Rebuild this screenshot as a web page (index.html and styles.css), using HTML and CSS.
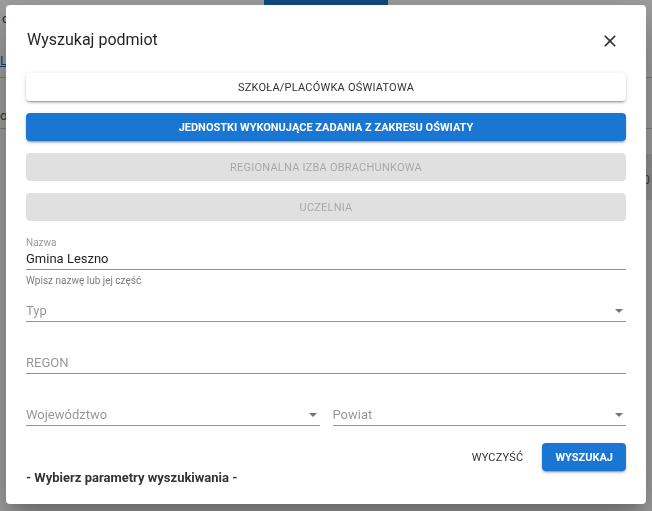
FILE: index.html
```html
<!DOCTYPE html>
<html lang="pl">
<head>
    <meta charset="UTF-8">
    <meta name="viewport" content="width=device-width, initial-scale=1.0">
    <title>Wyszukaj podmiot</title>
    <link rel="stylesheet" href="styles.css">
</head>
<body>
    <!-- page behind the dialog -->
    <div class="page">
        <div class="page-nav">
            <span class="page-nav-text">c</span>
            <div class="page-tab"></div>
        </div>
        <div class="page-row page-row--link">L</div>
        <div class="page-row page-row--tall">o *</div>
        <div class="page-box">0</div>
    </div>

    <div class="backdrop"></div>

    <div class="dialog-wrap">
        <div class="dialog">
            <div class="dialog-header">
                <h2 class="dialog-title">Wyszukaj podmiot</h2>
                <button class="close-btn" aria-label="Zamknij">
                    <svg width="20" height="20" viewBox="0 0 24 24"><path d="M19 6.41 17.59 5 12 10.59 6.41 5 5 6.41 10.59 12 5 17.59 6.41 19 12 13.41 17.59 19 19 17.59 13.41 12z" fill="#333"/></svg>
                </button>
            </div>

            <div class="type-list">
                <button class="type-btn type-btn--raised">Szkoła/placówka oświatowa</button>
                <button class="type-btn type-btn--active">Jednostki wykonujące zadania z zakresu oświaty</button>
                <button class="type-btn type-btn--disabled" disabled>Regionalna Izba Obrachunkowa</button>
                <button class="type-btn type-btn--disabled" disabled>Uczelnia</button>
            </div>

            <form class="search-form">
                <div class="field field--with-helper">
                    <label class="field-label" for="nazwa">Nazwa</label>
                    <input class="field-input" id="nazwa" type="text" value="Gmina Leszno">
                    <div class="field-helper">Wpisz nazwę lub jej część</div>
                </div>

                <div class="field field--no-label">
                    <div class="field-select">
                        <span class="field-placeholder">Typ</span>
                        <svg class="select-arrow" width="8" height="4" viewBox="0 0 8 4"><path d="M0 0h8L4 4z" fill="#757575"/></svg>
                    </div>
                </div>

                <div class="field field--no-label">
                    <input class="field-input" type="text" placeholder="REGON">
                </div>

                <div class="field-row">
                    <div class="field field--no-label">
                        <div class="field-select">
                            <span class="field-placeholder">Województwo</span>
                            <svg class="select-arrow" width="8" height="4" viewBox="0 0 8 4"><path d="M0 0h8L4 4z" fill="#757575"/></svg>
                        </div>
                    </div>
                    <div class="field field--no-label">
                        <div class="field-select">
                            <span class="field-placeholder">Powiat</span>
                            <svg class="select-arrow" width="8" height="4" viewBox="0 0 8 4"><path d="M0 0h8L4 4z" fill="#757575"/></svg>
                        </div>
                    </div>
                </div>

                <div class="actions">
                    <button type="reset" class="text-btn">Wyczyść</button>
                    <button type="submit" class="search-btn">Wyszukaj</button>
                </div>
            </form>

            <div class="search-info">- Wybierz parametry wyszukiwania -</div>
        </div>
    </div>
</body>
</html>
```

FILE: styles.css
```css
* {
    margin: 0;
    padding: 0;
    box-sizing: border-box;
}

body {
    font-family: Roboto, 'Noto Sans', sans-serif;
    background-color: #fff;
    overflow: hidden;
    height: 511px;
}

/* page behind */
.page {
    color: #1565c0;
    font-size: 13px;
}

.page-nav {
    display: flex;
    height: 48px;
}

.page-nav-text {
    padding: 11px 0 0 2px;
    color: #0d47a1;
    width: 264px;
}

.page-tab {
    width: 124px;
    background-color: #1976d2;
}

.page-row {
    height: 30px;
    border-bottom: 1px solid #ccc;
}

.page-row--link {
    padding-top: 5px;
    text-decoration: underline;
}

.page-row--tall {
    height: 51px;
    padding-top: 30px;
    color: #555;
}

.page-box {
    margin: 25px 0 0 auto;
    width: 180px;
    height: 46px;
    background-color: #e9e9e9;
    color: #666;
    text-align: right;
    padding: 18px 2px 0 0;
}

.backdrop {
    position: fixed;
    inset: 0;
    background-color: rgba(0, 0, 0, 0.38);
}

/* dialog */
.dialog-wrap {
    position: fixed;
    inset: 0;
    display: flex;
    justify-content: center;
    align-items: flex-start;
    padding-top: 5px;
}

.dialog {
    width: 640px;
    height: 499px;
    background-color: #fff;
    border-radius: 4px;
    padding: 25px 20px 0;
    box-shadow: 0 11px 15px -7px rgba(0,0,0,0.2), 0 24px 38px 3px rgba(0,0,0,0.14), 0 9px 46px 8px rgba(0,0,0,0.12);
}

.dialog-header {
    display: flex;
    justify-content: space-between;
    align-items: center;
    height: 20px;
    margin-bottom: 23px;
}

.dialog-title {
    font-size: 16px;
    line-height: 20px;
    font-weight: 400;
    color: rgba(0, 0, 0, 0.87);
    padding-left: 1px;
}

.close-btn {
    display: flex;
    border: none;
    background: none;
    margin: 2px 6px 0 0;
    cursor: pointer;
}

.type-list {
    display: flex;
    flex-direction: column;
    gap: 12px;
}

.type-btn {
    height: 28px;
    border: none;
    border-radius: 4px;
    font-family: inherit;
    font-size: 11px;
    letter-spacing: 0.02em;
    text-transform: uppercase;
    cursor: pointer;
}

.type-btn--raised {
    background-color: #fff;
    color: #333;
    box-shadow: 0 3px 1px -2px rgba(0,0,0,0.2), 0 2px 2px 0 rgba(0,0,0,0.14), 0 1px 5px 0 rgba(0,0,0,0.12);
}

.type-btn--active {
    background-color: #1976d2;
    color: #fff;
    font-weight: 700;
    letter-spacing: 0;
    box-shadow: 0 3px 1px -2px rgba(0,0,0,0.2), 0 2px 2px 0 rgba(0,0,0,0.14), 0 1px 5px 0 rgba(0,0,0,0.12);
}

.type-btn--disabled {
    background-color: #e0e0e0;
    color: rgba(0, 0, 0, 0.26);
    cursor: default;
}

/* form */
.search-form {
    margin-top: 16px;
    display: flex;
    flex-direction: column;
}

.field {
    display: flex;
    flex-direction: column;
    margin-bottom: 19px;
}

.field--no-label {
    padding-top: 13px;
}

.field--with-helper {
    margin-bottom: 2px;
}

.field-label {
    height: 13px;
    font-size: 10px;
    line-height: 11px;
    color: rgba(0, 0, 0, 0.42);
}

.field-input,
.field-select {
    width: 100%;
    height: 20px;
    padding: 0 0 2px;
    border: none;
    border-bottom: 1px solid rgba(0, 0, 0, 0.42);
    font-family: inherit;
    font-size: 13px;
    line-height: 17px;
    color: rgba(0, 0, 0, 0.87);
    outline: none;
    background: none;
}

.field-input::placeholder {
    color: rgba(0, 0, 0, 0.42);
    opacity: 1;
}

.field-select {
    display: flex;
    justify-content: space-between;
    align-items: center;
}

.field-placeholder {
    color: rgba(0, 0, 0, 0.42);
}

.select-arrow {
    margin-right: 3px;
}

.field-helper {
    margin-top: 5px;
    font-size: 10px;
    line-height: 12px;
    color: rgba(0, 0, 0, 0.54);
}

.field-row {
    display: grid;
    grid-template-columns: 1fr 1fr;
    gap: 13px;
}

.field-row .field {
    margin-bottom: 17px;
}

.actions {
    display: flex;
    justify-content: flex-end;
    align-items: center;
}

.text-btn {
    height: 28px;
    padding: 0 8px;
    margin-right: 11px;
    border: none;
    background: none;
    font-family: inherit;
    font-size: 11px;
    letter-spacing: 0.02em;
    text-transform: uppercase;
    color: #333;
    cursor: pointer;
}

.search-btn {
    height: 28px;
    padding: 0 13px;
    border: none;
    border-radius: 4px;
    background-color: #1976d2;
    color: #fff;
    font-family: inherit;
    font-size: 11px;
    font-weight: 700;
    text-transform: uppercase;
    cursor: pointer;
    box-shadow: 0 3px 1px -2px rgba(0,0,0,0.2), 0 2px 2px 0 rgba(0,0,0,0.14), 0 1px 5px 0 rgba(0,0,0,0.12);
}

.search-info {
    margin-top: -2px;
    font-size: 13px;
    line-height: 17px;
    font-weight: 700;
    color: #333;
}
```
